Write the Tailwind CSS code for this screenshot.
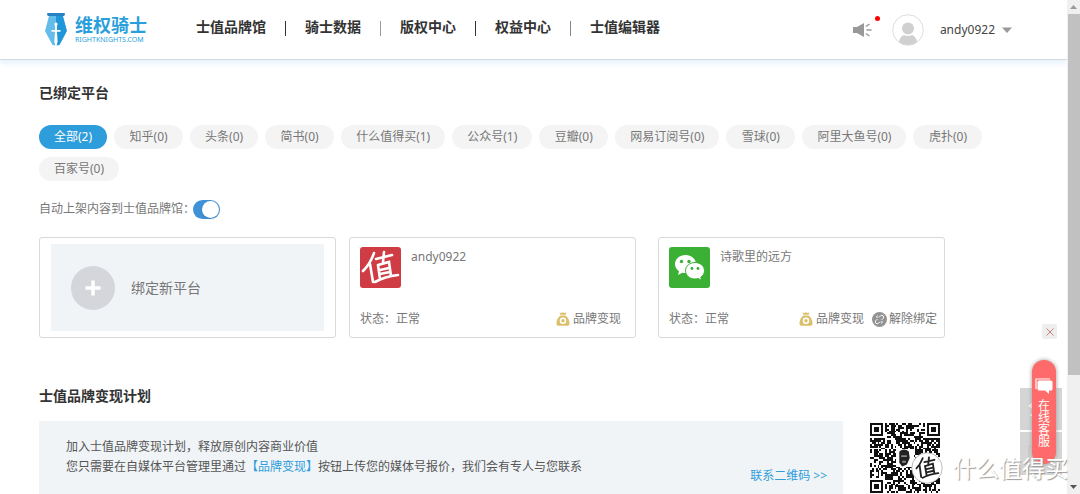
<!DOCTYPE html>
<html lang="zh-CN">
<head>
<meta charset="utf-8">
<meta name="viewport" content="width=device-width, initial-scale=1">
<title>维权骑士</title>
<script src="https://cdn.jsdelivr.net/npm/@tailwindcss/browser@4"></script>
</head>
<body class="relative flex h-screen overflow-hidden bg-white font-['Noto_Sans','Noto_Sans_CJK_SC',sans-serif] text-[12px] leading-5 text-[#777]">

<svg class="hidden" aria-hidden="true">
  <symbol id="bag" viewBox="0 0 14 14">
    <path fill="#dcbf6c" d="M3.4.4 5.4.9 7 .2l1.6.7 2-.5-1 2.4H4.400zM4.400 3.400h5.200C12.300 5.300 13.700 8.600 13.500 11.700c-.1 1.400-.8 2-2.200 2H2.700c-1.400 0-2.100-.6-2.200-2C.3 8.600 1.700 5.300 4.400 3.400z"/>
    <circle cx="7" cy="8.700" r="2.500" fill="none" stroke="#fff" stroke-width="1.500"/>
  </symbol>
</svg>

<div class="min-w-0 flex-1 overflow-hidden">
  <header class="flex h-[60px] items-center border-b border-[#d5d9de] pl-[44px] shadow-[0_4px_5px_#eaf3fd]">
    <a href="#" class="flex items-center gap-[7px] text-[#2b9fdb]" aria-label="维权骑士">
      <svg class="h-[33px] w-[24px]" viewBox="0 0 24 33" aria-hidden="true">
        <path fill="#2583c4" d="M3.500 0h17l.5 1-.8 2H3.800L3 1z"/>
        <path fill="#63bce9" d="M5 3h7v29.500L8.500 32 1 18z"/>
        <path fill="#1f96d8" d="M12 3h7l4 15-7.500 14-3.500.5z"/>
        <path fill="#fff" d="M12 9.500a1.700 1.700 0 0 1 1 3v4.500h3.500v1.800H13l.6 10L12.500 33h-1L10.300 28.800l.7-10H7.500V17H11v-4.500a1.700 1.700 0 0 1 1-3z"/>
      </svg>
      <span class="block">
        <span class="block text-[18px] leading-5 font-bold">维权骑士</span>
        <span class="block text-[7px] leading-[9px]">RIGHTKNIGHTS.COM</span>
      </span>
    </a>
    <nav class="mb-[6px] ml-[30px] flex items-center text-[14px] font-bold whitespace-nowrap text-[#333]">
      <a href="#" class="px-[19px]">士值品牌馆</a><span class="mt-1 h-[15px] w-px bg-[#333]"></span>
      <a href="#" class="px-[19px]">骑士数据</a><span class="mt-1 h-[15px] w-px bg-[#999]"></span>
      <a href="#" class="px-[19px]">版权中心</a><span class="mt-1 h-[15px] w-px bg-[#333]"></span>
      <a href="#" class="px-[19px]">权益中心</a><span class="mt-1 h-[15px] w-px bg-[#888]"></span>
      <a href="#" class="px-[19px]">士值编辑器</a>
    </nav>
    <div class="mr-[55px] ml-auto flex items-center">
      <button class="relative mr-[19px] h-5 w-5" aria-label="消息">
        <svg class="h-5 w-5" viewBox="0 0 20 20" aria-hidden="true">
          <path fill="#999" d="M0 7h4l7-4v14l-7-4H0z"/>
          <path stroke="#999" stroke-width="1.500" d="M13.500 10h5M12.800 6.500l3.700-2.500M12.800 13.500l3.700 2.500"/>
        </svg>
        <span class="absolute -top-[4px] -right-[7px] h-[5px] w-[5px] rounded-full bg-[#f00]"></span>
      </button>
      <button class="flex items-center text-[#444]">
        <svg class="mr-4 h-8 w-8" viewBox="0 0 32 32" aria-hidden="true">
          <circle cx="16" cy="16" r="15.300" fill="#fff" stroke="#ddd"/>
          <circle cx="16" cy="14.500" r="6" fill="#d0d0d0"/>
          <path fill="#d0d0d0" d="M7 28c.5-4 3-6.500 5-7 2.500 1.300 5.500 1.300 8 0 2 .5 4.500 3 5 7-5 4-13 4-18 0z"/>
        </svg>
        <span class="pt-px">andy0922</span>
        <svg class="ml-[7px] h-[6px] w-[10px]" viewBox="0 0 10 6" aria-hidden="true"><path fill="#999" d="M0 .5h10L5 6z"/></svg>
      </button>
    </div>
  </header>

  <main class="pt-[23px] pl-[39px]">
    <h2 class="text-[14px] font-bold text-[#333]">已绑定平台</h2>
    <div class="mt-[22px] flex flex-wrap gap-x-[7px] gap-y-2 pr-[60px]">
      <button class="h-6 rounded-full bg-[#2e9ddb] px-[15px] text-white">全部(2)</button>
      <button class="h-6 min-w-[69px] rounded-full bg-[#f4f4f4] px-[15px]">知乎(0)</button>
      <button class="h-6 rounded-full bg-[#f4f4f4] px-[15px]">头条(0)</button>
      <button class="h-6 min-w-[69px] rounded-full bg-[#f4f4f4] px-[15px]">简书(0)</button>
      <button class="h-6 rounded-full bg-[#f4f4f4] px-[15px]">什么值得买(1)</button>
      <button class="h-6 rounded-full bg-[#f4f4f4] px-[15px]">公众号(1)</button>
      <button class="h-6 min-w-[69px] rounded-full bg-[#f4f4f4] px-[15px]">豆瓣(0)</button>
      <button class="h-6 rounded-full bg-[#f4f4f4] px-[15px]">网易订阅号(0)</button>
      <button class="h-6 min-w-[69px] rounded-full bg-[#f4f4f4] px-[15px]">雪球(0)</button>
      <button class="h-6 rounded-full bg-[#f4f4f4] px-[15px]">阿里大鱼号(0)</button>
      <button class="h-6 min-w-[69px] rounded-full bg-[#f4f4f4] px-[15px]">虎扑(0)</button>
      <button class="h-6 rounded-full bg-[#f4f4f4] px-[15px]">百家号(0)</button>
    </div>

    <div class="mt-[18px] flex items-center">
      <label for="auto">自动上架内容到士值品牌馆：</label>
      <input id="auto" type="checkbox" checked class="-ml-[2px] flex h-[19px] w-[27px] appearance-none items-center rounded-full bg-[#bbb] px-px before:block before:h-[17px] before:w-[17px] before:rounded-full before:bg-white before:shadow before:content-[''] checked:justify-end checked:bg-[#3f92d8]">
    </div>

    <div class="mt-[18px] flex items-stretch">
      <button class="mr-[13px] w-[297px] rounded-[3px] border border-[#d9d9d9] px-[11px] py-[6px] text-left">
        <span class="flex h-[87px] items-center gap-4 bg-[#f0f4f7] pl-5 text-[14px]">
          <svg class="h-11 w-11" viewBox="0 0 44 44" aria-hidden="true"><circle cx="22" cy="22" r="22" fill="#d5d6db"/><path stroke="#fff" stroke-width="3.500" d="M14.500 22h15M22 14.500v15"/></svg>
          绑定新平台
        </span>
      </button>
      <article class="mr-[22px] flex w-[287px] flex-col justify-between rounded-[3px] border border-[#d9d9d9] px-[10px] pt-[9px] pb-2">
        <div class="flex items-start gap-[10px]">
          <span class="flex h-[41px] w-[41px] items-center justify-center rounded-[3px] bg-[#d03c43]">
            <svg class="h-[41px] w-[41px]" viewBox="0 0 41 41" fill="none" stroke="#fff" stroke-width="2.600" stroke-linecap="round" aria-hidden="true">
              <path d="M14 6C12 12 8 19 3 24M10 17c1 6 2 12 3 18M16 12l16-4M24 5l-1 10M18 18l11-3 2 14M18 18l2 14M20 23l9-2M20 27l10-2M15 35c7-4 14-6 23-7"/>
            </svg>
          </span>
          <h3>andy0922</h3>
        </div>
        <div class="flex items-center">
          <span>状态：正常</span>
          <button class="mr-1 ml-auto flex items-center gap-[3px]"><svg class="h-[14px] w-[14px]" aria-hidden="true"><use href="#bag"/></svg>品牌变现</button>
        </div>
      </article>
      <article class="flex w-[287px] flex-col justify-between rounded-[3px] border border-[#d9d9d9] px-[10px] pt-[9px] pb-2">
        <div class="flex items-start gap-[10px]">
          <svg class="h-[41px] w-[41px] rounded-[3px] bg-[#3bb035]" viewBox="0 0 41 41" aria-hidden="true">
            <path fill="#fff" d="M16.500 8C10.500 8 6 12 6 17c0 3 1.500 5.500 4 7.200L9 28l4.200-2.300c1.100.3 2.200.4 3.300.4C22.500 26 27 22 27 17s-4.500-9-10.500-9z"/>
            <path fill="#fff" stroke="#3bb035" d="M26 15.500c-5.300 0-9.500 3.600-9.500 8.200s4.200 8.300 9.500 8.300c1.200 0 2.300-.2 3.300-.5l3.400 1.900-.9-3.200c2.300-1.500 3.700-3.800 3.700-6.500 0-4.600-4.200-8.200-9.500-8.200z"/>
            <g fill="#3bb035"><circle cx="12.500" cy="14.500" r="1.700"/><circle cx="20" cy="14.500" r="1.700"/><circle cx="23" cy="21.500" r="1.400"/><circle cx="29" cy="21.500" r="1.400"/></g>
          </svg>
          <h3>诗歌里的远方</h3>
        </div>
        <div class="-mr-[3px] flex items-center">
          <span>状态：正常</span>
          <button class="mr-2 ml-auto flex items-center gap-[3px]"><svg class="h-[14px] w-[14px]" aria-hidden="true"><use href="#bag"/></svg>品牌变现</button>
          <button class="flex items-center gap-[2px]">
            <svg class="h-[15px] w-[15px]" viewBox="0 0 15 15" fill="none" stroke="#fff" aria-hidden="true">
              <circle cx="7.500" cy="7.500" r="7.500" fill="#939393" stroke="none"/>
              <path d="M7 5.300 8.500 3.800a1.800 1.800 0 0 1 2.600 2.600L9.600 7.900M8 9.700 6.500 11.200A1.800 1.800 0 0 1 3.900 8.600L5.400 7.100M4 4.800l1.600.6M11 10.200l-1.600-.6M5.500 3.500l.3 1M9.500 11.500l-.3-1"/>
            </svg>解除绑定</button>
        </div>
      </article>
    </div>

    <h2 class="mt-12 text-[14px] font-bold text-[#333]">士值品牌变现计划</h2>
    <section class="mt-[15px] flex items-start">
      <div class="flex h-[90px] w-[804px] justify-between bg-[#f0f4f7] pt-4 pr-4 pl-[27px]">
        <p class="text-[#555]">加入士值品牌变现计划，释放原创内容商业价值<br>您只需要在自媒体平台管理里通过<a href="#" class="text-[#2e9ddb]">【品牌变现】</a>按钮上传您的媒体号报价，我们会有专人与您联系</p>
        <a href="#" class="mt-[29px] text-[#2e9ddb]">联系二维码 &gt;&gt;</a>
      </div>
      <svg id="qr" class="mt-[2px] ml-[27px] h-[70px] w-[70px]" viewBox="0 0 37 37" role="img" aria-label="二维码"></svg>
    </section>
  </main>
</div>

<div class="flex w-[13px] flex-col items-center bg-[#f0f0f0]" aria-hidden="true">
  <svg class="h-[14px] w-[13px] shrink-0" viewBox="0 0 13 14"><path fill="#999" d="M3 9h7L6.500 5z"/></svg>
  <div class="h-[73%] w-[12px] bg-[#c1c1c1]"></div>
  <svg class="mt-auto h-[14px] w-[13px] shrink-0" viewBox="0 0 13 14"><path fill="#555" d="M3 5h7L6.500 9z"/></svg>
</div>

<!-- Floating service tools -->
<div class="absolute right-[18px] bottom-[19px] grid w-[42px] gap-[2px]">
  <button class="h-[42px] bg-[#d5d5d5] pl-2 text-left" aria-label="分享">
    <svg class="h-5 w-5" viewBox="0 0 20 20" fill="none" stroke="#fff" stroke-width="2" aria-hidden="true"><path d="M6 3 2 7l4 3M2 16h5"/></svg>
  </button>
  <button class="h-[43px] bg-[#d5d5d5] pl-2 text-left" aria-label="反馈">
    <svg class="h-5 w-5" viewBox="0 0 20 20" fill="none" stroke="#c4c4c4" aria-hidden="true"><path d="M1 2h14v14H1z"/></svg>
  </button>
</div>
<button class="absolute right-[23px] bottom-[155px] flex h-[15px] w-[15px] items-center justify-center rounded-[2px] bg-[#eee]" aria-label="关闭">
  <svg class="h-2 w-2" viewBox="0 0 8 8" stroke="#c28275" aria-hidden="true"><path d="m.5.5 7 7m0-7-7 7"/></svg>
</button>
<button class="absolute right-6 bottom-[30px] flex h-[104px] w-6 flex-col items-center rounded-full bg-[#ff6a6a] pt-[18px] leading-3 text-white shadow-[0_0_4px_#999]">
  <svg class="mb-[6px] h-4 w-[18px] shrink-0" viewBox="0 0 18 16" aria-hidden="true"><path fill="none" stroke="#fff" stroke-width="1.200" d="M1 11V1h14"/><path fill="#fff" d="M4 2.500h12q1.500 0 1.500 1.500v7q0 1.500-1.500 1.500h-2V16l-4-3.500H4Q2.500 12.500 2.500 11V4Q2.500 2.500 4 2.500z"/></svg>
  <span class="w-3">在线客服</span>
</button>

<!-- Watermark -->
<div class="pointer-events-none absolute right-3 bottom-[10px] flex items-center gap-[10px] text-[23px] leading-8 text-white text-shadow-[1px_1px_1px_#999]">
  <svg class="h-8 w-8" viewBox="0 0 41 41" fill="none" aria-hidden="true">
    <circle cx="20.500" cy="20.500" r="19.500" fill="#fff" stroke="#aaa"/>
    <path stroke="#222" stroke-width="2.400" stroke-linecap="round" d="M15 8c-2 5-4 9-8 13M11 17l2 15M17 13l13-3M23 7l-1 10M18 18l10-3 2 13M18 18l2 12M20 22l8-2M20 26l9-2M15 33c7-4 12-5 20-6"/>
  </svg>
  <span>什么值得买</span>
</div>

<script>
  // Draws the contact code: three finders, one alignment mark, data cells and the portrait.
  const N = 37;
  let seed = 922;
  const rnd = () => (seed = (seed * 1103515245 + 12345) % 2147483648) / 2147483648;
  const ring = (x, y, cx, cy) => Math.max(Math.abs(x - cx), Math.abs(y - cy));
  let d = '';
  for (let y = 0; y < N; y++) for (let x = 0; x < N; x++) {
    let on = rnd() < 0.56;
    for (const [cx, cy] of [[3, 3], [N - 4, 3], [3, N - 4]]) {
      const r = ring(x, y, cx, cy);
      if (r <= 4) on = r !== 2 && r !== 4;
    }
    const a = ring(x, y, 30, 30);
    if (a <= 2) on = a !== 1;
    if (ring(x, y, 18, 18) <= 4) on = false;
    if (on) d += `M${x} ${y}h1v1h-1z`;
  }
  document.getElementById('qr').innerHTML =
    `<path fill="#111" shape-rendering="crispEdges" d="${d}"/>` +
    '<path fill="#222" d="M15.500 15q2.500-2 5 0l.5 3.500-1.500 3.500-2.500 1-1.500-2z"/><path fill="#888" d="M16.500 17h3v1h-3zM17 20h2v1h-2z"/>';
</script>
</body>
</html>
